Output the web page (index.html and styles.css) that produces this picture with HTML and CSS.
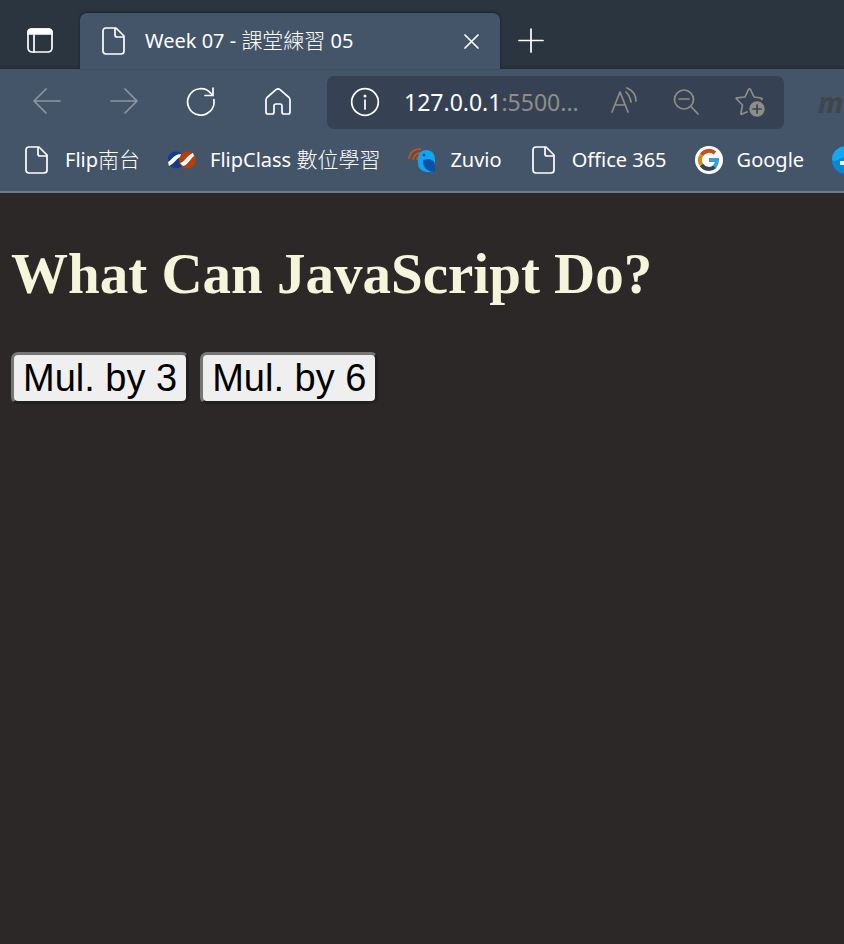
FILE: index.html
```html
<!DOCTYPE html>
<html lang="zh-Hant">
<head>
<meta charset="utf-8">
<meta name="viewport" content="width=device-width, initial-scale=1">
<title>Week 07 - 課堂練習 05</title>
<link rel="stylesheet" href="styles.css">
</head>
<body>
<svg class="defs" aria-hidden="true">
  <symbol id="doc" viewBox="0 0 28 30"><path d="M6 2H16L24 10V25Q24 28 21 28H6Q3 28 3 25V5Q3 2 6 2ZM15 2V9Q15 11 17 11H24"/></symbol>
</svg>
<header class="browser">
  <div class="tabstrip">
    <button class="icon-btn tab-menu" aria-label="Tab actions"><svg class="icon" width="28" height="28" viewBox="0 0 28 28"><rect x="2" y="2" width="24" height="23" rx="4"/><path class="solid" d="M2 7V5Q2 2 6 2H22Q26 2 26 5V7Z"/><path d="M8 8V25"/></svg></button>
    <div class="tab">
      <svg class="icon" width="28" height="30"><use href="#doc"/></svg>
      <span class="tab-title">Week 07 - <span class="cjk">課堂練習</span> 05</span>
      <button class="icon-btn" aria-label="Close tab"><svg class="icon" width="18" height="18" viewBox="0 0 18 18"><path d="M3 3L16 16M16 3L3 16"/></svg></button>
    </div>
    <button class="icon-btn new-tab" aria-label="New tab"><svg class="icon" width="26" height="26" viewBox="0 0 26 26"><path d="M13 1V24M1 12.500H25"/></svg></button>
  </div>
  <div class="toolbar">
    <nav class="nav">
      <button class="icon-btn dim" aria-label="Back"><svg class="icon" width="30" height="30" viewBox="0 0 30 30"><path d="M28 14H2M14 2L2 14L14 26"/></svg></button>
      <button class="icon-btn dim" aria-label="Forward"><svg class="icon" width="30" height="30" viewBox="0 0 30 30"><path d="M2 14H28M16 2L28 14L16 26"/></svg></button>
      <button class="icon-btn" aria-label="Refresh"><svg class="icon" width="30" height="30" viewBox="0 0 30 30"><path d="M27.800 12.500A13.200 13.200 0 1 1 25 6.500L27 8.500M27 1V8.500H19"/></svg></button>
      <button class="icon-btn" aria-label="Home"><svg class="icon" width="30" height="30" viewBox="0 0 30 30"><path d="M3 13Q3 11.500 4 10.500L13 2.700Q15 1 17 2.700L26 10.500Q27 11.500 27 13V25Q27 27 25 27H21Q19 27 19 25V19Q19 17 17 17H13Q11 17 11 19V25Q11 27 9 27H5Q3 27 3 25Z"/></svg></button>
    </nav>
    <div class="address">
      <svg class="icon" width="30" height="30" viewBox="0 0 30 30"><circle cx="15" cy="15" r="13.300"/><path d="M15 13V22"/><circle class="dot" cx="15" cy="9" r="1.500"/></svg>
      <span class="url"><span class="host">127.0.0.1</span>:5500...</span>
      <button class="icon-btn" aria-label="Read aloud"><svg class="icon" width="28" height="30" viewBox="0 0 28 30"><path d="M2 25L10 5L18 25M5 18H15M16 5Q20 9 21 15M17 1Q26 5 26 14"/></svg></button>
      <button class="icon-btn" aria-label="Zoom out"><svg class="icon" width="28" height="30" viewBox="0 0 28 30"><circle cx="12" cy="12.500" r="9.500"/><path d="M7 12H17M19 19.500L26 27"/></svg></button>
      <button class="icon-btn" aria-label="Add to favorites"><svg class="icon" width="32" height="32" viewBox="0 0 32 32"><path d="M13 26L8 28Q6.500 29 7 27L8.500 19L2.500 13Q1.500 12 3 11.800L11 11L14.500 3.500Q15.500 2 16.500 3.500L20 11L27 12Q29 12.300 27.500 13.500"/><circle class="solid" cx="23" cy="23" r="6.800"/><path class="plus" d="M23 19V27M19 23H27"/></svg></button>
    </div>
    <span class="extension">m</span>
  </div>
  <nav class="bookmarks">
    <a href="#"><svg class="icon" width="28" height="30"><use href="#doc"/></svg><span>Flip<span class="cjk">南台</span></span></a>
    <a href="#"><svg width="28" height="20" viewBox="0 0 28 20"><circle cx="8" cy="10" r="8.500" fill="#123e8c"/><circle cx="19.500" cy="10" r="8.500" fill="#b73d0b"/><path d="M0 12C4 10 6 4 13 4L12 7C8 9 6 14 1 16ZM12 13C17 12 18 6 25 3L26 6C22 9 20 15 15 16Z" fill="#fff"/></svg><span>FlipClass <span class="cjk">數位學習</span></span></a>
    <a href="#"><svg width="28" height="26" viewBox="0 0 28 26"><g fill="none" stroke="#bd5118" stroke-width="2"><path d="M1 12Q2 2 13 2M5 13Q6 6 13 6M9 13Q9 10 12 9"/></g><path d="M10 12Q10 3 19 3Q27 4 27 12V25H19Q10 24 10 16Z" fill="#11a6f1"/><path d="M15 13Q26 10 27 18V25Q15 25 15 13Z" fill="#0754a4"/><circle cx="16" cy="8" r="1.500" fill="#0754a4"/></svg>Zuvio</a>
    <a href="#"><svg class="icon" width="28" height="30"><use href="#doc"/></svg>Office 365</a>
    <a href="#"><svg width="28" height="28" viewBox="0 0 28 28"><circle cx="14" cy="14" r="14" fill="#fff"/><g fill="none" stroke-width="4"><path d="M6.500 9A9 9 0 0 1 20 7" stroke="#c65116"/><path d="M6.500 9A9 9 0 0 0 6.500 19" stroke="#d18a12"/><path d="M6.500 19A9 9 0 0 0 20 20.500" stroke="#344452"/><path d="M14 14H22Q22 18 19.500 21" stroke="#369be9"/></g></svg>Google</a>
    <a href="#" aria-label="Bookmark"><svg width="28" height="28" viewBox="0 0 28 28"><circle cx="14" cy="14" r="14" fill="#0787dc"/><path d="M0 14A14 14 0 0 1 14 0V10L3 15Z" fill="#13a9ef"/><path d="M8 15H20V19H8Z" fill="#fff"/></svg></a>
  </nav>
</header>
<main>
  <h1>What Can JavaScript Do?</h1>
  <div class="actions"><button type="button">Mul. by 3</button><button type="button">Mul. by 6</button></div>
</main>
</body>
</html>
```
FILE: styles.css
```css
* { box-sizing: border-box; }
body { margin: 0; min-height: 100vh; background: #2c2827; overflow-x: hidden; }
.defs { position: absolute; width: 0; height: 0; }
svg { flex: none; display: block; }
.browser {
  background: #455569;
  color: #fff;
  font: 20px/28px "Noto Sans", "Noto Sans CJK TC", sans-serif;
  border-bottom: 2px solid #6b7b90;
  overflow: hidden;
}
.cjk { font-size: 21px; line-height: 1; font-weight: 300; }
.icon { fill: none; stroke: currentColor; stroke-width: 1.7; stroke-linejoin: round; stroke-linecap: round; }
.icon .solid, .icon .dot { fill: currentColor; }
.icon .dot { stroke: none; }
.icon .plus { stroke: #364253; }
.icon-btn { display: flex; flex: none; padding: 0; border: 0; background: none; color: inherit; }
.dim { color: #8c969f; }

.tabstrip {
  display: flex;
  height: 69px;
  padding-top: 13px;
  background: #2b3540;
  box-shadow: inset 0 -3px 3px -2px #1f2731;
}
.tab-menu { width: 80px; align-items: center; justify-content: center; }
.tab {
  display: flex;
  align-items: center;
  gap: 17px;
  width: 420px;
  padding: 0 20px;
  background: #455569;
  border-radius: 7px 7px 0 0;
  box-shadow: 0 -1px 3px #1b222b;
}
.tab-title { flex: 1; white-space: nowrap; }
.new-tab { align-items: center; margin-left: 18px; }

.toolbar { display: flex; align-items: center; height: 66px; gap: 34px; padding-left: 32px; }
.nav { display: flex; gap: 47px; }
.address {
  display: flex;
  flex: 0 0 457px;
  min-width: 0;
  align-items: center;
  height: 53px;
  padding: 0 18px 0 23px;
  border-radius: 7px;
  background: #364253;
  color: #8e8e87;
}
.address .icon-btn { margin-left: 34px; }
.address > .icon { color: #fff; }
.url { flex: 1; min-width: 0; margin-left: 24px; font-size: 23px; white-space: nowrap; }
.host { color: #fff; }
.extension { color: #414449; font: italic bold 28px/32px "Open Sans", sans-serif; }

.bookmarks { display: flex; align-items: center; gap: 28px; height: 56px; padding: 0 0 6px 23px; }
.bookmarks a { display: flex; flex: none; align-items: center; gap: 14px; color: inherit; text-decoration: none; white-space: nowrap; }

main { padding: 49px 11px; }
h1 { margin: 0 0 46px; color: #f5f5dc; font: bold 57px/64px "Liberation Serif", serif; }
.actions { display: flex; flex-wrap: wrap; gap: 11px; }
.actions button {
  padding: 1px 9px;
  border: 3px solid;
  border-color: #767676 #212121 #212121 #767676;
  border-radius: 7px;
  background: #efefef;
  color: #000;
  font: 38px/44px "Liberation Sans", sans-serif;
}
```
